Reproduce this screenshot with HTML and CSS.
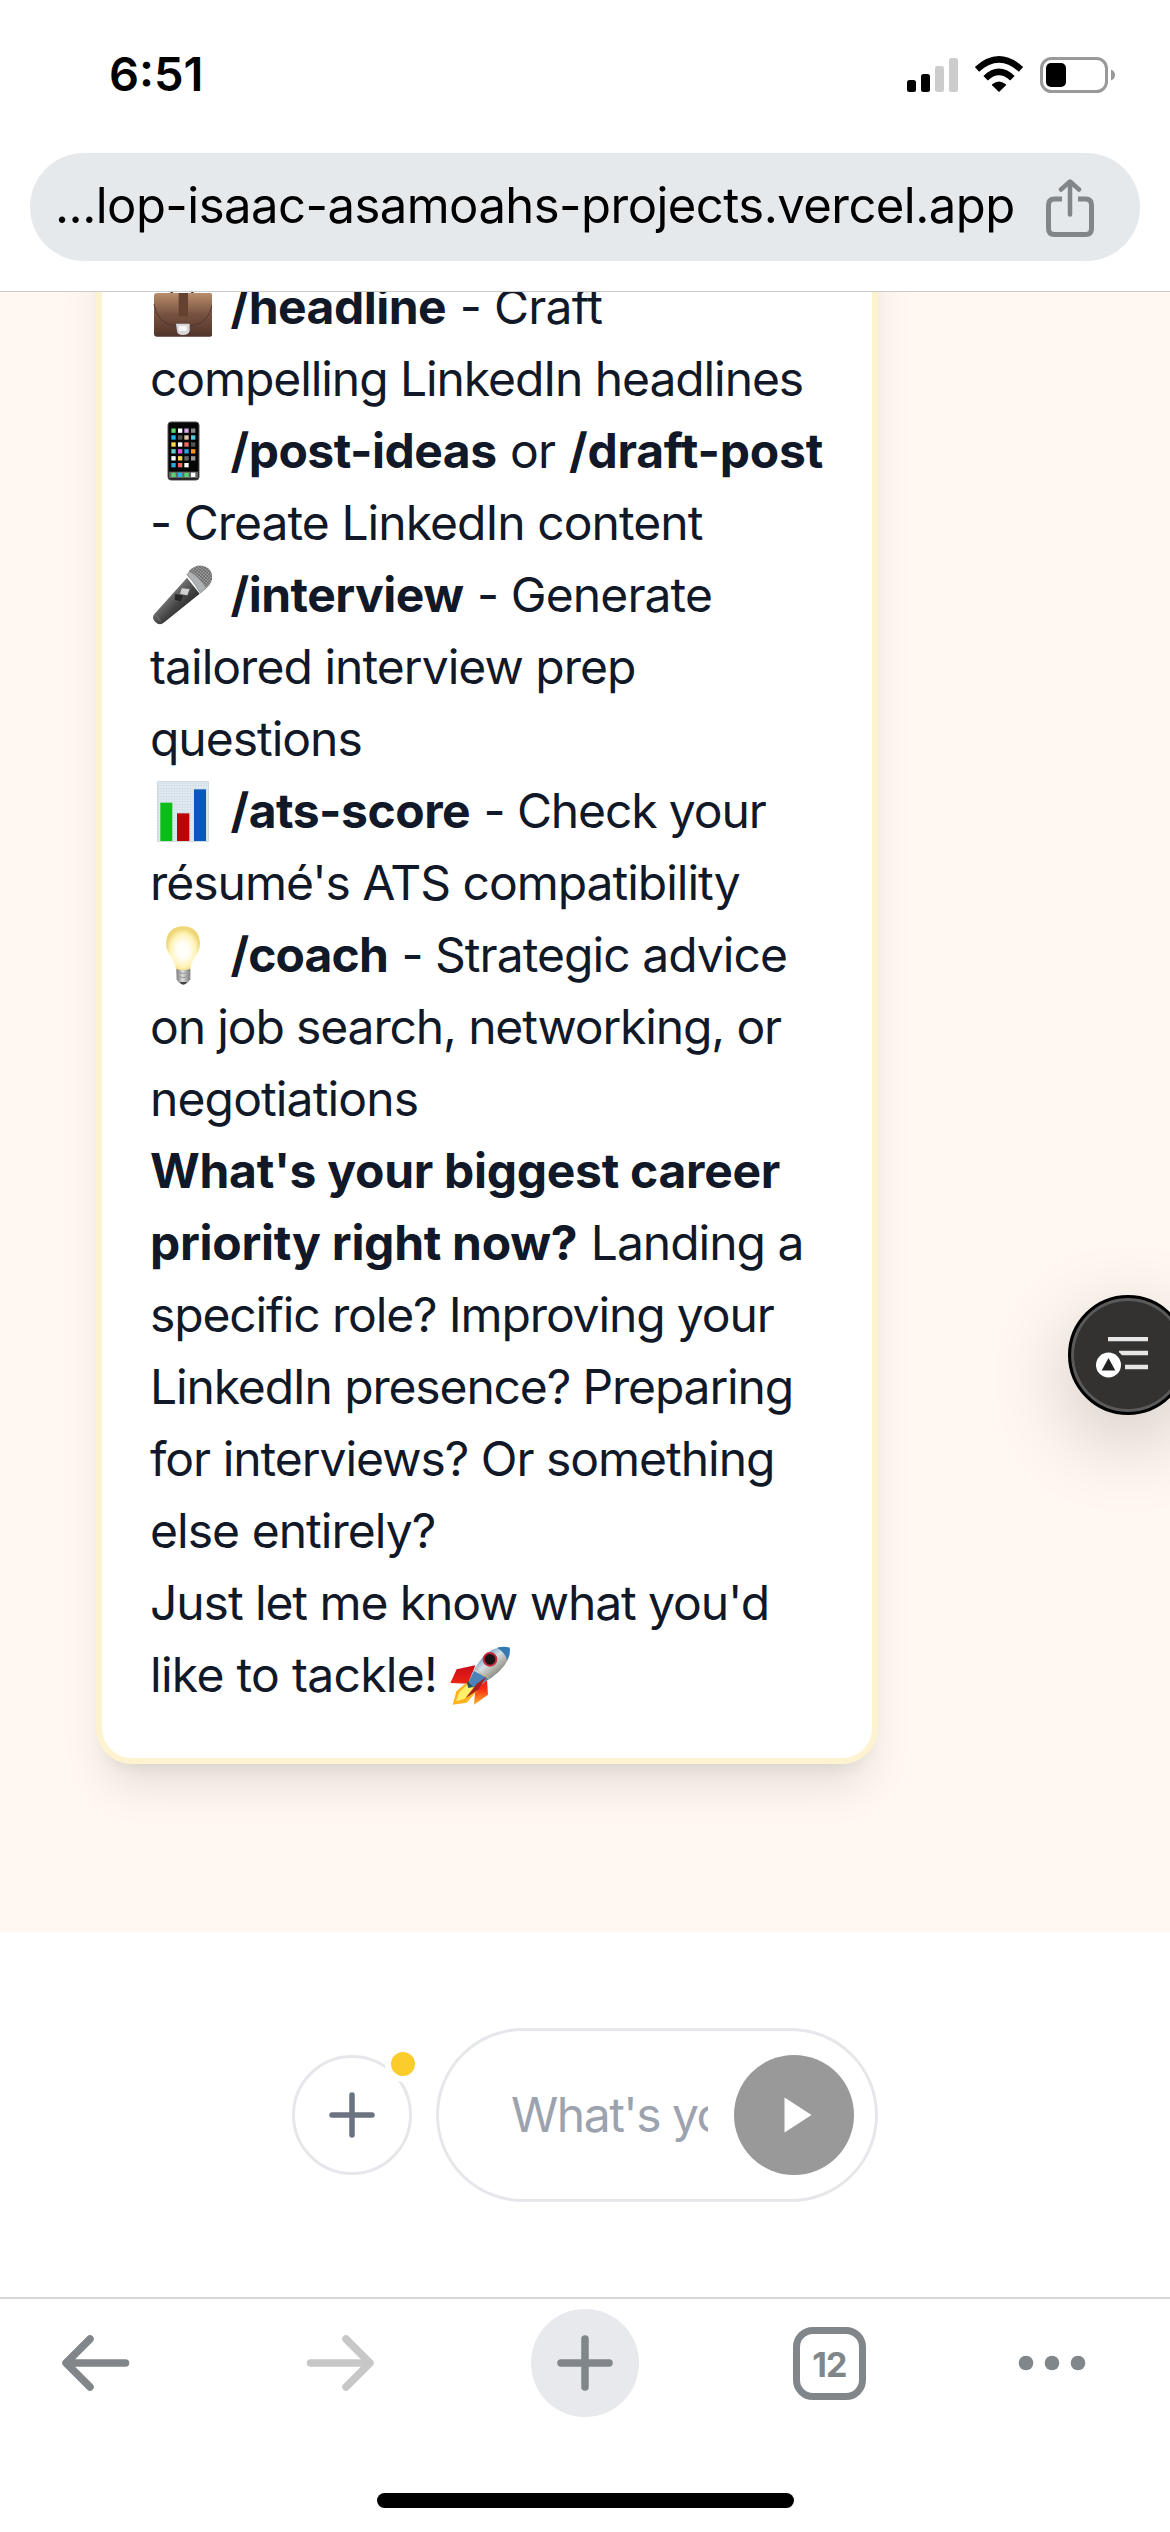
FILE: index.html
```
<!DOCTYPE html>
<html lang="en">
<head>
<meta charset="utf-8">
<title>Career assistant</title>
<link rel="stylesheet" href="styles.css">
</head>
<body>
<div class="phone">
  <header class="top">
    <div class="status">
      <span class="time">6:51</span>
      <svg class="status-icons" viewBox="0 0 208 38" width="208" height="38">
        <rect x="0" y="25" width="9" height="12" rx="2.5"/>
        <rect x="14" y="19" width="9" height="18" rx="2.5"/>
        <rect x="28" y="11" width="9" height="26" rx="2.5" fill="#ccc"/>
        <rect x="42" y="3" width="9" height="34" rx="2.5" fill="#ccc"/>
        <path d="M92 37L85 30.2Q84.800 29.600 85.500 29Q92 24 98.500 29Q99.200 29.600 99 30.200Z"/>
        <path d="M78.600 23.200Q92 10.500 105.400 23.200" fill="none" stroke="#000" stroke-width="6.400"/>
        <path d="M70 14.300Q92 -5.600 114 14.300" fill="none" stroke="#000" stroke-width="6.400"/>
        <rect x="134.500" y="3.500" width="65" height="33" rx="10" fill="none" stroke="#999" stroke-width="3"/>
        <rect x="139" y="8" width="20" height="24" rx="5"/>
        <path d="M204 14.500Q208 16 208 20T204 25.500Z" fill="#999"/>
      </svg>
    </div>
    <div class="address">
      <span class="url">...lop-isaac-asamoahs-projects.vercel.app</span>
      <svg class="share" viewBox="0 0 48 60" width="48" height="60" fill="none" stroke="#80868a" stroke-width="5" stroke-linecap="round" stroke-linejoin="round">
        <path d="M16 20H8.500Q2.500 20 2.500 26V49.500Q2.500 55.500 8.500 55.500H39.500Q45.500 55.500 45.500 49.500V26Q45.500 20 39.500 20H32" stroke-linecap="butt"/>
        <path d="M24 35.500V3M15 10.500L24 2.500L33 10.500" stroke-width="4.500"/>
      </svg>
    </div>
  </header>

  <main class="chat">
    <article class="bubble">
      <div class="line"><svg class="emoji" viewBox="0 0 186 186"><defs>
          <linearGradient id="leather" x2="0" y2="1"><stop stop-color="#b98e6b"/><stop offset=".5" stop-color="#76513f"/><stop offset="1" stop-color="#50342a"/></linearGradient></defs>
          <path d="M65 52V42Q65 36 73 36H119Q127 36 127 42V52" fill="none" stroke="#4b3026" stroke-width="7"/>
          <rect x="12" y="51" width="176" height="131" rx="9" fill="url(#leather)"/>
          <path d="M12 85Q22 143 75 150H122Q176 143 187 85" fill="none" stroke="#54382c" stroke-width="3"/>
          <path d="M86 51H114V121H86Z" fill="#65412f"/>
          <path d="M78 143H119V164Q116 177 99 177T81 164Z" fill="#d8d8da"/><path d="M87 150H110V165H87Z" fill="#f6f6f6"/>
        </svg> <b class="t45">/headline</b> <span class="t70">- Craft</span></div>
      <div class="line t108">compelling LinkedIn headlines</div>
      <div class="line"><svg class="emoji" viewBox="0 0 186 186">
          <rect x="54" y="6" width="93" height="174" rx="9" fill="#050505" stroke="#555" stroke-width="3"/>
          <g stroke-width="13">
            <path d="M64 32H77" stroke="#58d56c"/><path d="M84 32H97" stroke="#fff"/><path d="M103 32H116" stroke="#d7a7e8"/><path d="M123 32H136" stroke="#888"/>
            <path d="M64 52.500H77" stroke="#1cb5ee"/><path d="M84 52.500H97" stroke="#555"/><path d="M103 52.500H116" stroke="#e5c6a5"/><path d="M123 52.500H136" stroke="#51cfdf"/>
            <path d="M64 73.500H77" stroke="#fbd84e"/><path d="M84 73.500H97" stroke="#fff"/><path d="M103 73.500H116" stroke="#f16c65"/><path d="M123 73.500H136" stroke="#555"/>
            <path d="M64 94H77" stroke="#59cfd1"/><path d="M84 94H97" stroke="#e053df"/><path d="M103 94H116" stroke="#1aa7eb"/><path d="M123 94H136" stroke="#ff9416"/>
            <path d="M64 115H77" stroke="#fff"/><path d="M84 115H97" stroke="#f9d746"/><path d="M103 115H116" stroke="#666"/><path d="M123 115H136" stroke="#999"/>
            <path d="M64 135.500H77" stroke="#27a9e5"/><path d="M84 135.500H97" stroke="#f2665f"/><path d="M103 135.500H116" stroke="#fff"/>
          </g>
          <path d="M57 155H144V175H57Z" fill="#666"/>
          <path d="M64 158H77V171H64ZM103 158H116V171H103Z" fill="#54d66a"/><path d="M84 158H97V171H84Z" fill="#20b9ef"/><path d="M123 158H136V171H123Z" fill="#fff"/>
        </svg> <b class="t45">/post-ideas</b> <span class="t70">or</span> <b class="t20">/draft-post</b></div>
      <div class="line t95">- Create LinkedIn content</div>
      <div class="line"><svg class="emoji" viewBox="0 0 186 186"><defs>
          <linearGradient id="barrel" x2="1" y2="1"><stop offset=".3" stop-color="#858585"/><stop offset=".55" stop-color="#444"/><stop offset=".8" stop-color="#1f1f1f"/></linearGradient>
          <pattern id="mesh" width="7" height="7" patternUnits="userSpaceOnUse" patternTransform="rotate(40)"><rect width="7" height="7" fill="#a1a1a1"/><path d="M0 0H7M0 0V7" stroke="#555" stroke-width="3"/></pattern></defs>
          <path d="M111 41L149 89L43 175Q29 187 16 174T14 149Z" fill="url(#barrel)"/>
          <path d="M116 22Q133 3 156 5Q183 9 187 36Q187 61 164 76Z" fill="url(#mesh)"/>
          <path d="M111 32L119 22Q148 38 169 72L151 87Q132 54 111 32Z" fill="#aeb2b4" stroke="#777" stroke-width="2"/>
          <path d="M95 73L119 75L112 94L90 90Z" fill="#d0d0d0"/><path d="M76 91L99 95L91 111L75 107Z" fill="#272727" stroke="#111"/>
          <path d="M18 154L32 172" stroke="#777" stroke-width="3"/>
        </svg> <b class="t45">/interview</b> <span class="t90">- Generate</span></div>
      <div class="line t95">tailored interview prep</div>
      <div class="line t100">questions</div>
      <div class="line"><svg class="emoji" viewBox="0 0 186 186"><defs>
          <pattern id="grid" width="8" height="8" patternUnits="userSpaceOnUse"><rect width="8" height="8" fill="#e3edf5"/><path d="M0 0H8M0 0V8" stroke="#becbd6" stroke-width="2"/></pattern></defs>
          <rect x="23" y="5" width="152" height="179" fill="url(#grid)" stroke="#c3ccd2" stroke-width="2"/>
          <path d="M31 68H67V183H31Z" fill="#0abd17"/><path d="M81 100H118V183H81Z" fill="#bd0505"/><path d="M132 28H168V183H132Z" fill="#0957bd"/>
        </svg> <b class="t45">/ats-score</b> <span class="t110">- Check your</span></div>
      <div class="line t100">résumé's ATS compatibility</div>
      <div class="line"><svg class="emoji" viewBox="0 0 186 186"><defs>
          <radialGradient id="glow" cy=".55"><stop offset=".35" stop-color="#fffef7"/><stop offset=".75" stop-color="#fff3b9"/><stop offset="1" stop-color="#efd778"/></radialGradient>
          <linearGradient id="cap"><stop stop-color="#777"/><stop offset=".45" stop-color="#ddd"/><stop offset="1" stop-color="#777"/></linearGradient></defs>
          <path d="M79 133H121V166Q112 181 99 181T80 166Z" fill="url(#cap)"/>
          <path d="M89 174H112Q107 182 100 182T89 174Z" fill="#444"/>
          <path d="M78 135Q76 117 62 95Q48 78 48 58Q51 8 99 7Q147 8 150 58Q150 78 137 95Q123 115 121 135Q99 142 78 135Z" fill="url(#glow)"/>
          <path d="M79 145Q99 152 121 145M80 157Q99 164 120 157" fill="none" stroke="#999" stroke-width="3"/>
        </svg> <b class="t90">/coach</b> <span class="t95">- Strategic advice</span></div>
      <div class="line t110">on job search, networking, or</div>
      <div class="line t88">negotiations</div>
      <div class="line"><b class="t29">What's your biggest career</b></div>
      <div class="line"><b class="t29">priority right now?</b> <span class="t100">Landing a</span></div>
      <div class="line t110">specific role? Improving your</div>
      <div class="line t115">LinkedIn presence? Preparing</div>
      <div class="line t100">for interviews? Or something</div>
      <div class="line t95">else entirely?</div>
      <div class="line t108">Just let me know what you'd</div>
      <div class="line"><span class="t70">like to tackle!</span> <svg class="emoji" viewBox="0 0 186 186"><defs>
          <linearGradient id="hull" x1=".2" y1=".15" x2=".8" y2=".85"><stop stop-color="#397dbb"/><stop offset=".4" stop-color="#d5dfe4"/><stop offset=".65" stop-color="#aaa99f"/><stop offset="1" stop-color="#324f68"/></linearGradient>
          <linearGradient id="fin" x2="0" y2="1"><stop stop-color="#c80d18"/><stop offset=".6" stop-color="#f92b13"/><stop offset="1" stop-color="#ffb42c"/></linearGradient></defs>
          <path d="M82 64L26 76L7 117L62 119ZM117 108L120 152L78 182L82 135Z" fill="url(#fin)"/>
          <path d="M53 118L25 142L14 182L56 176L91 136Z" fill="#ffb323"/><path d="M57 123L34 145L24 172L50 164L77 132Z" fill="#fff06a"/>
          <path d="M56 113L71 109L78 128L61 132Z" fill="#31515c"/>
          <path d="M62 113Q77 68 111 32Q143 3 184 10Q190 35 168 66Q137 105 78 130Z" fill="url(#hull)"/>
          <path d="M147 11Q169 6 185 11Q188 29 178 50Q172 25 147 11Z" fill="#357ab6"/>
          <path d="M78 81L123 104L78 130L62 113Z" fill="#4b83b9"/><path d="M83 69Q95 92 123 103" fill="none" stroke="#cdbb81" stroke-width="3"/>
          <circle cx="126" cy="46" r="19" fill="#151515" stroke="#c3283a" stroke-width="6"/>
          <path d="M116 97L86 120L53 162L91 137Z" fill="#a5211f"/>
        </svg></div>
    </article>
    <button class="reader" aria-label="Reader">
      <svg viewBox="0 0 52 42" width="52" height="42"><path d="M12 2H52M23 16H52M29 30H52" stroke="#e6e6e6" stroke-width="4.500"/><circle cx="12.500" cy="28" r="16.500" fill="#333230"/><circle cx="12.500" cy="28" r="12.500" fill="#fff"/><path d="M12.500 21L19.300 33.500H5.700Z" fill="#222"/></svg>
    </button>
  </main>

  <section class="composer">
    <div class="attach">
      <svg viewBox="0 0 48 48" width="48" height="48" stroke="#6b7280" stroke-width="5.500" stroke-linecap="round"><path d="M24 4V44M4 24H44"/></svg>
      <i class="dot"></i>
    </div>
    <div class="field">
      <span class="placeholder">What's your</span>
      <div class="send"><svg viewBox="0 0 28 36" width="28" height="36"><path d="M.5 .5L27.500 18L.5 35.500Z" fill="#fff"/></svg></div>
    </div>
  </section>

  <nav class="toolbar">
    <div class="tools">
      <svg class="back" viewBox="0 0 68 56" width="68" height="56" fill="none" stroke="#80868a" stroke-width="7.500" stroke-linecap="round" stroke-linejoin="round"><path d="M63.500 28H6M28 4L4 28L28 52"/></svg>
      <svg class="forward" viewBox="0 0 68 56" width="68" height="56" fill="none" stroke="#c7c7c7" stroke-width="7.500" stroke-linecap="round" stroke-linejoin="round"><path d="M4.500 28H62M40 4L64 28L40 52"/></svg>
      <div class="new-tab"><svg viewBox="0 0 56 56" width="56" height="56" stroke="#80868a" stroke-width="7.500" stroke-linecap="round"><path d="M28 4V52M4 28H52"/></svg></div>
      <div class="tabs">12</div>
      <svg viewBox="0 0 68 16" width="68" height="16" fill="#80868a"><circle cx="8" cy="8" r="7.300"/><circle cx="34" cy="8" r="7.300"/><circle cx="60" cy="8" r="7.300"/></svg>
    </div>
    <div class="home"></div>
  </nav>
</div>
</body>
</html>
```
FILE: styles.css
```
* { box-sizing: border-box; }
body { margin: 0; background: #fff; font-family: Inter, "Liberation Sans", sans-serif; color: #111827; }
.phone { width: 1170px; height: 2532px; display: flex; flex-direction: column; overflow: hidden; }

.top { height: 292px; flex: none; border-bottom: 1px solid #c9cbcd; }
.status { height: 153px; padding: 0 55px 5px 109px; display: flex; align-items: center; justify-content: space-between; }
.time { font-size: 47px; font-weight: 600; color: #000; margin-top: -2px; }
.address { height: 108px; margin: 0 30px; padding: 0 46px 0 25px; border-radius: 54px; background: #e5e9ec; display: flex; align-items: center; justify-content: space-between; }
.url { font-size: 49px; letter-spacing: -.54px; color: #000; white-space: nowrap; margin-top: -3px; }
.share { margin-top: 3px; }

.chat { position: relative; height: 1640px; flex: none; overflow: hidden; display: flex; flex-direction: column; justify-content: flex-end; align-items: flex-start; padding: 0 0 168px 96px; background: #fff8f1; }
.bubble { width: 782px; flex: none; padding: 49px 48px 47px; border: 6px solid #fdf3d0; border-radius: 36px; background: #fff; box-shadow: 0 30px 45px -9px rgba(0,0,0,.1), 0 12px 18px -12px rgba(0,0,0,.1); }
.line { height: 72px; font-size: 48px; line-height: 72px; white-space: nowrap; }
.line b { font-weight: 700; }
.emoji { width: 62px; height: 62px; vertical-align: -14px; margin-right: 5px; }
.line > span + .emoji { margin: 0 0 0 -3px; }
.t20 { letter-spacing: -.2px; }
.t29 { letter-spacing: -.29px; }
.t45 { letter-spacing: -.5px; }
.t70 { letter-spacing: -.7px; }
.t88 { letter-spacing: -.88px; }
.t90 { letter-spacing: -.9px; }
.t95 { letter-spacing: -.96px; }
.t100 { letter-spacing: -1.02px; }
.t108 { letter-spacing: -1.08px; }
.t110 { letter-spacing: -1.13px; }
.t115 { letter-spacing: -1.15px; }

.reader { position: absolute; left: 1068px; top: 1003px; width: 120px; height: 120px; padding: 0; border: 3px solid #000; border-radius: 50%; background: #333230; box-shadow: inset 0 0 0 3px #5a5a5a, 0 24px 84px rgba(0,0,0,.2); }
.reader svg { position: absolute; left: 25px; top: 39px; }

.composer { height: 365px; flex: none; padding: 96px 292px 0; display: flex; gap: 24px; align-items: flex-start; }
.attach { position: relative; width: 120px; height: 120px; margin-top: 27px; flex: none; border: 3px solid #e5e7eb; border-radius: 50%; display: flex; align-items: center; justify-content: center; }
.dot { position: absolute; left: 90px; top: -12px; width: 36px; height: 36px; border: 6px solid #fff; border-radius: 50%; background: #facc2c; }
.field { width: 442px; height: 174px; flex: none; padding: 0 21px 0 72px; border: 3px solid #e5e7eb; border-radius: 87px; display: flex; align-items: center; justify-content: space-between; }
.placeholder { width: 197px; overflow: hidden; white-space: nowrap; font-size: 48px; line-height: 60px; letter-spacing: -1.5px; color: #9ca3af; }
.send { width: 120px; height: 120px; border-radius: 50%; background: #999; display: flex; align-items: center; justify-content: center; padding-left: 7px; }

.toolbar { flex: 1; border-top: 2px solid #d4d5d7; display: flex; flex-direction: column; align-items: center; justify-content: space-between; padding: 10px 0 24px; }
.tools { width: 100%; height: 108px; padding-left: 62px; display: flex; align-items: center; }
.back { margin-right: 176px; }
.forward { margin-right: 157px; }
.new-tab { width: 108px; height: 108px; margin-right: 154px; border-radius: 50%; background: #e8e9ed; display: flex; align-items: center; justify-content: center; }
.tabs { width: 73px; height: 73px; margin-right: 152px; border: 7px solid #80868a; border-radius: 20px; font-size: 34px; line-height: 61px; font-weight: 700; color: #80868a; text-align: center; letter-spacing: -.8px; }
.home { width: 417px; height: 15px; border-radius: 8px; background: #000; }
```
